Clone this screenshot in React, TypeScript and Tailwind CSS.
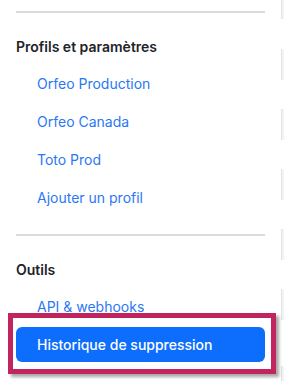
import React from "react";

const profiles = ["Orfeo Production", "Orfeo Canada", "Toto Prod", "Ajouter un profil"];

// bouts de lignes du tableau à droite (coupé par la fenêtre)
const strips = [
  { mt: "mt-0", h: "h-[19px]" },
  { mt: "mt-[30px]", h: "h-[31px]" },
  { mt: "mt-[29px]", h: "h-[31px]" },
  { mt: "mt-[29px]", h: "h-[31px]" },
  { mt: "mt-[29px]", h: "h-[31px]" },
  { mt: "mt-[29px]", h: "h-[31px]" },
  { mt: "mt-[46px]", h: "h-[15px]" },
];

function NavLink({ label }: { label: string }) {
  return (
    <a href="#" className="block py-[9px] pl-[21px] text-[14px] leading-5 text-[#2a78f4]">
      {label}
    </a>
  );
}

export default function App() {
  return (
    <div
      className="relative flex h-[381px] w-[284px] overflow-hidden bg-white"
      style={{ fontFamily: "Inter, 'Liberation Sans', sans-serif" }}
    >
      <aside className="w-[281px] shrink-0 px-4 pt-[11px]">
        <div className="h-[2px] bg-[#dadade]" />

        <div className="mt-6 text-[14px] font-semibold leading-5 text-[#212327]">Profils et paramètres</div>
        <nav className="mt-2">
          {profiles.map((p) => (
            <NavLink key={p} label={p} />
          ))}
        </nav>

        <div className="mt-[17px] h-[2px] bg-[#dadade]" />

        <div className="mt-6 text-[14px] font-semibold leading-5 text-[#212327]">Outils</div>
        <nav className="mt-2">
          <NavLink label="API & webhooks" />
          <a
            href="#"
            className="mt-px flex h-[35px] items-center rounded-md bg-[#0d6efd] pl-[21px] text-[14px] font-medium text-white"
          >
            Historique de suppression
          </a>
        </nav>
      </aside>

      <div className="flex w-[3px] flex-col">
        {strips.map((s, i) => (
          <div key={i} className={`${s.mt} ${s.h} shrink-0 border-l border-[#e2e2e2] bg-[#f3f3f3]`} />
        ))}
      </div>

      {/* cadre d'annotation */}
      <div className="pointer-events-none absolute left-[8px] top-[313px] h-[61px] w-[268px] border-[5px] border-[#c2245f] shadow-[3px_3px_3px_rgba(0,0,0,0.35)]" />
    </div>
  );
}
